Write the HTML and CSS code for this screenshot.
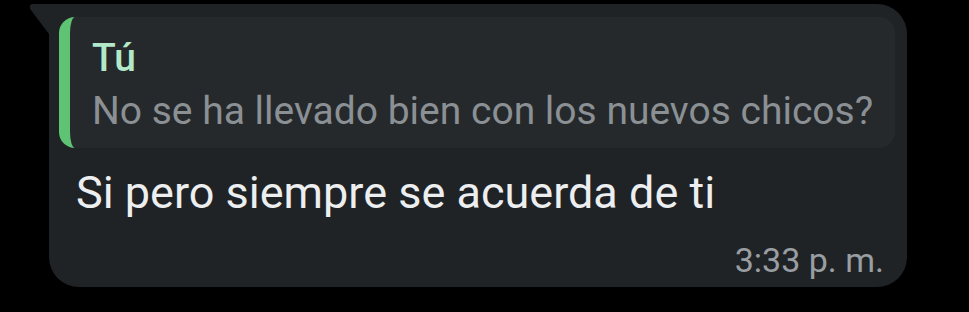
FILE: index.html
```html
<!DOCTYPE html>
<html lang="es">
<head>
    <meta charset="UTF-8">
    <meta name="viewport" content="width=device-width, initial-scale=1.0">
    <title>Mensaje</title>
    <link rel="stylesheet" href="styles.css">
</head>
<body>
    <div class="chat">
        <div class="bubble">
            <div class="quote">
                <div class="quote-author">Tú</div>
                <div class="quote-text">No se ha llevado bien con los nuevos chicos?</div>
            </div>
            <div class="message">Si pero siempre se acuerda de ti</div>
            <div class="meta">3:33 p. m.</div>
        </div>
    </div>
</body>
</html>
```

FILE: styles.css
```css
body {
    margin: 0;
    padding: 0;
    background: #000;
    font-family: Roboto, 'Noto Sans', sans-serif;
    overflow: hidden;
}

.chat {
    padding: 4px 0 0 49px;
}

.bubble {
    position: relative;
    width: 858px;
    box-sizing: border-box;
    background: #202326;
    border-radius: 0 30px 30px 30px;
    padding: 13px 12px 7px 10px;
}

/* coda del fumetto */
.bubble::before {
    content: "";
    position: absolute;
    left: -20px;
    top: 0;
    width: 20px;
    height: 30px;
    background: #202326;
    clip-path: path('M4 0 H20 V30 L1.5 5.5 Q-0.5 0 4 0 Z');
}

.quote {
    background: #25292c;
    border-left: 11px solid #5ec474;
    border-radius: 16px;
    height: 131px;
    box-sizing: border-box;
    padding: 17px 20px 13px 22px;
}

.quote-author {
    color: #b3e8c8;
    font-size: 39px;
    font-weight: 500;
    line-height: 48px;
}

.quote-text {
    color: #8b9094;
    font-size: 39px;
    line-height: 48px;
    margin-top: 5px;
    white-space: nowrap;
}

.message {
    color: #eceeef;
    font-size: 45px;
    line-height: 52px;
    margin-top: 19px;
    padding-left: 17px;
}

.meta {
    color: #999ea2;
    font-size: 34px;
    line-height: 40px;
    margin-top: 21px;
    text-align: right;
    padding-right: 11px;
}
```
